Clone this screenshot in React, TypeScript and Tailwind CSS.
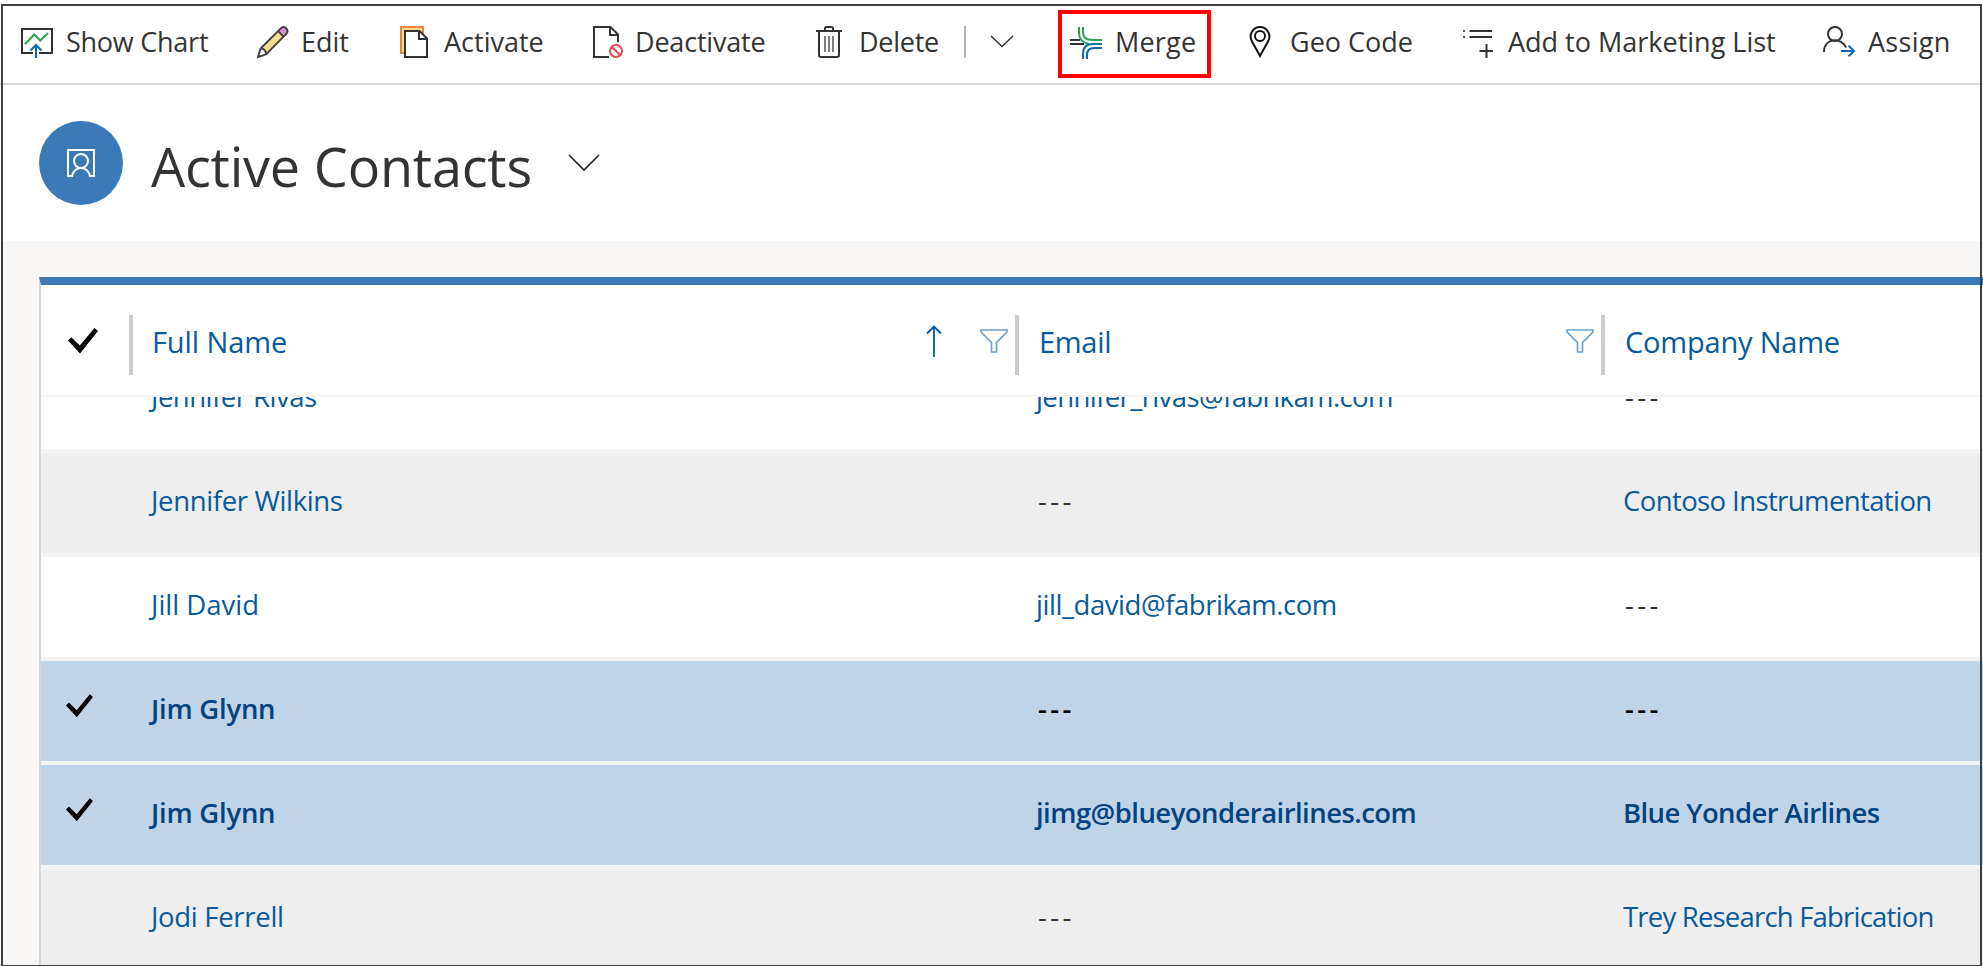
import type { ReactNode } from "react";

const ink = "#333333";
const blue = "#0f67b5";

function Icon({ children, className = "" }: { children: ReactNode; className?: string }) {
  return (
    <svg viewBox="0 0 32 32" fill="none" className={`h-8 w-8 shrink-0 overflow-visible ${className}`}>
      {children}
    </svg>
  );
}

const ChartIcon = () => (
  <Icon>
    <path d="M12 27H1V3h30v24H18" stroke={ink} strokeWidth="2" />
    <path d="M4 18.3 13.3 8.5l6 6L27 7" stroke="#27a34f" strokeWidth="2" />
    <path d="M15 32V19M9.5 24.5 15 19l5.5 5.5" stroke={blue} strokeWidth="2" />
  </Icon>
);

const PencilIcon = () => (
  <Icon>
    <path d="M4.6 22.6 24 3l6 6L10 28.4Z" fill="#f8da92" />
    <path d="M23 4c5-6 12 1 6.5 6.5Z" fill="#d792d9" />
    <path d="M2 31 4.6 22.6 10 28.4Z" fill="#fff" />
    <path
      d="M2 31 4.6 22.6 24.500 2.600c4-4 9.500 1.500 5.500 5.500L10 28.400ZM22 5l6 6M4.600 22.600c3-.6 6 2.800 5.400 5.800"
      stroke="#404040"
      strokeWidth="1.9"
    />
  </Icon>
);

const ActivateIcon = () => (
  <Icon>
    <path d="M2 1h22v26H2Z" fill="#f9db8f" stroke="#e8843d" strokeWidth="2" />
    <path d="M6 5h14.5L28 12.5V31H6Z" fill="#fff" stroke={ink} strokeWidth="2" />
    <path d="M20 5v8h8" stroke={ink} strokeWidth="2" />
  </Icon>
);

const DeactivateIcon = () => (
  <Icon>
    <path d="M19 31H4V1h16.5L28 8.5V16M20 1v8h8" stroke={ink} strokeWidth="2" />
    <circle cx="26" cy="25" r="6" stroke="#e9484d" strokeWidth="2" />
    <path d="m21.8 20.8 8.4 8.4" stroke="#e9484d" strokeWidth="2" />
  </Icon>
);

const TrashIcon = () => (
  <Icon>
    <path
      d="M2 5h26M11 5V2.5Q11 1 12.5 1h5Q19 1 19 2.5V5M5 5v24q0 2 2 2h16q2 0 2-2V5"
      stroke={ink}
      strokeWidth="2"
    />
    <path d="M11 10v16M15 10v16M19 10v16" stroke="#707070" strokeWidth="1.8" />
  </Icon>
);

const MergeIcon = () => (
  <Icon>
    <path d="M0 13h10M0 17h14" stroke={ink} strokeWidth="2" />
    <path d="M13 0v4.5Q13 13 22 13h10M9 0v6q0 9 10 11" stroke="#27a34f" strokeWidth="2" />
    <path d="M13 32v-5q0-10 10-10h9M17 32v-4q0-7 7-7h8" stroke={blue} strokeWidth="2" />
  </Icon>
);

const PinIcon = () => (
  <Icon>
    <path d="M15 30 7 15.5C3 8 8.5 1 15 1s12 7 8 14.500Z" stroke="#111" strokeWidth="2" />
    <circle cx="15" cy="10" r="5" stroke="#111" strokeWidth="2" />
  </Icon>
);

const ListIcon = () => (
  <Icon>
    <path d="M6.5 5H29M6.5 11H29M23.5 18v14M16.5 25H30" stroke={ink} strokeWidth="2" />
    <path d="M0 5h2M0 11h2" stroke="#555" strokeWidth="2" />
  </Icon>
);

const AssignIcon = () => (
  <Icon className="-ml-px">
    <circle cx="12" cy="8" r="7" stroke={ink} strokeWidth="2" />
    <path d="M1 26c0-15 18-14.5 22-4.5" stroke={ink} strokeWidth="2" />
    <path d="M18 25h13M25.5 19.8 31 25l-5.5 5.2" stroke={blue} strokeWidth="2" />
  </Icon>
);

const Funnel = () => (
  <svg viewBox="0 0 28 24" fill="none" className="-mt-[9px] h-6 w-7 shrink-0">
    <path d="M1 1h26v2L16.500 13.500V23h-5V13.500L1 3Z" stroke="#6ba1cd" strokeWidth="1.7" />
  </svg>
);

const Check = ({ className }: { className: string }) => (
  <svg viewBox="0 0 30 26" className={className}>
    <path d="M0 12.5 3.3 9.2 11.8 17.6 26.5 0 30 3 12 25.5Z" fill="#000" />
  </svg>
);

function Command({ icon, label, className = "" }: { icon: ReactNode; label: string; className?: string }) {
  return (
    <button className={`flex shrink-0 items-center gap-[13px] whitespace-nowrap text-left ${className}`}>
      {icon}
      <span>{label}</span>
    </button>
  );
}

type Cell = { text: string; fit?: string };
type Row = { name: Cell; email?: Cell; company?: Cell; selected?: boolean; shade?: boolean };

const rows: Row[] = [
  {
    name: { text: "Jennifer Rivas", fit: "tracking-[-0.5px]" },
    email: { text: "jennifer_rivas@fabrikam.com", fit: "tracking-[-0.6px]" },
  },
  {
    name: { text: "Jennifer Wilkins", fit: "tracking-[-0.35px]" },
    company: { text: "Contoso Instrumentation", fit: "tracking-[-0.6px]" },
    shade: true,
  },
  {
    name: { text: "Jill David", fit: "tracking-[0px]" },
    email: { text: "jill_david@fabrikam.com", fit: "tracking-[-0.45px]" },
  },
  { name: { text: "Jim Glynn", fit: "tracking-[-0.25px]" }, selected: true },
  {
    name: { text: "Jim Glynn", fit: "tracking-[-0.25px]" },
    email: { text: "jimg@blueyonderairlines.com", fit: "tracking-[-0.55px]" },
    company: { text: "Blue Yonder Airlines", fit: "tracking-[-0.6px]" },
    selected: true,
  },
  {
    name: { text: "Jodi Ferrell", fit: "tracking-[-0.3px]" },
    company: { text: "Trey Research Fabrication", fit: "tracking-[-0.8px]" },
    shade: true,
  },
];

function Value({ cell, selected }: { cell?: Cell; selected?: boolean }) {
  if (!cell) return <span className={`pl-[2px] tracking-[3.4px] ${selected ? "text-black" : "text-[#333]"}`}>---</span>;
  return <a className={`${selected ? "text-[#04437f]" : "text-[#085a9d]"} ${cell.fit ?? ""}`}>{cell.text}</a>;
}

function ContactRow({ row }: { row: Row }) {
  const tone = row.selected ? "bg-[#c0d4e8] font-semibold" : row.shade ? "bg-[#eeeeee]" : "bg-white";
  return (
    <div className={`flex h-[104px] shrink-0 items-center whitespace-nowrap border-b-4 border-[#f4f4f4] pb-[5px] ${tone}`}>
      <div className="w-[110px] shrink-0 pl-[25px]">
        {row.selected && <Check className="-mt-[6px] h-6 w-[27px]" />}
      </div>
      <div className="w-[885px] shrink-0">
        <Value cell={row.name} selected={row.selected} />
      </div>
      <div className="w-[587px] shrink-0">
        <Value cell={row.email} selected={row.selected} />
      </div>
      <Value cell={row.company} selected={row.selected} />
    </div>
  );
}

export default function App() {
  return (
    <div className="relative flex h-[966px] w-[1983px] flex-col overflow-hidden bg-white font-['Open_Sans',sans-serif] text-[#333]">
      <div className="flex h-[85px] shrink-0 items-center border-b-2 border-[#d8d8d8] pl-[21px] text-[27px]">
        <Command className="w-[235px] pt-px tracking-[-0.25px]" icon={<ChartIcon />} label="Show Chart" />
        <Command className="w-[143px] pt-px" icon={<PencilIcon />} label="Edit" />
        <Command className="w-[191px] pt-px" icon={<ActivateIcon />} label="Activate" />
        <Command className="w-[224px] pt-px tracking-[-0.2px]" icon={<DeactivateIcon />} label="Deactivate" />
        <Command className="w-[150px] pt-px tracking-[-0.25px]" icon={<TrashIcon />} label="Delete" />
        <div className="h-8 w-[2px] shrink-0 bg-[#b3b3b3]" />
        <svg viewBox="0 0 24 13" fill="none" className="ml-6 h-[13px] w-6 shrink-0">
          <path d="m1 1 11 10.5L23 1" stroke="#333" strokeWidth="1.5" />
        </svg>
        <div className="ml-11 mt-[5px] flex h-[68px] w-[153px] shrink-0 items-center border-4 border-[#ff0000] pb-[3px] pl-2">
          <Command className="tracking-[0.2px]" icon={<MergeIcon />} label="Merge" />
        </div>
        <Command className="ml-[34px] w-[218px] pt-px" icon={<PinIcon />} label="Geo Code" />
        <Command className="w-[361px] pt-px" icon={<ListIcon />} label="Add to Marketing List" />
        <Command className="pt-px tracking-[0.3px]" icon={<AssignIcon />} label="Assign" />
      </div>

      <div className="flex h-[156px] shrink-0 items-center pl-[39px]">
        <div className="flex h-[84px] w-[84px] items-center justify-center rounded-full bg-[#3b79b7]">
          <svg viewBox="0 0 28 28" fill="none" stroke="#fff" strokeWidth="2" className="h-7 w-7">
            <path d="M5 27H1V1h26v26h-4" />
            <circle cx="14" cy="12" r="7" />
            <path d="M5 28c1-12 17-12 18 0" />
          </svg>
        </div>
        <h1 className="ml-7 mt-1.5 whitespace-nowrap text-[54px] tracking-[-0.2px]">Active Contacts</h1>
        <svg viewBox="0 0 32 18" fill="none" className="ml-9 h-[18px] w-8">
          <path d="m1 1 15 15L31 1" stroke="#222" strokeWidth="1.6" />
        </svg>
      </div>

      <div className="flex min-h-0 flex-1 bg-[#f8f7f6] pl-[39px] pt-9">
        <div className="flex flex-1 flex-col border-l-2 border-t-8 border-l-[#d6d6d6] border-t-[#3b79b7] bg-white">
          <div className="flex h-[112px] shrink-0 items-center whitespace-nowrap border-b-2 border-[#f3f3f3] pt-[10px] text-[29px] text-[#085a9d]">
            <div className="w-[88px] shrink-0 pl-[27px]">
              <Check className="-mt-[8px] h-[26px] w-[30px]" />
            </div>
            <div className="flex h-[60px] w-[886px] shrink-0 items-center border-l-4 border-[#cbcbcb] pl-[19px] pr-[7px]">
              <span className="-mt-[7px] flex-1 tracking-[-0.1px]">Full Name</span>
              <svg viewBox="0 0 16 32" fill="none" className="-mt-[9px] mr-[38px] h-8 w-4">
                <path d="M8 32V2M1 8.5 8 1.5l7 7" stroke="#085a9d" strokeWidth="1.8" />
              </svg>
              <Funnel />
            </div>
            <div className="flex h-[60px] w-[586px] shrink-0 items-center border-l-4 border-[#cbcbcb] pl-5 pr-[7px]">
              <span className="-mt-[7px] flex-1 tracking-[-0.3px]">Email</span>
              <Funnel />
            </div>
            <div className="flex h-[60px] flex-1 items-center border-l-4 border-[#cbcbcb] pl-5">
              <span className="-mt-[7px] tracking-[-0.2px]">Company Name</span>
            </div>
          </div>
          <div className="flex min-h-0 flex-1 flex-col justify-start overflow-hidden text-[27.5px]">
            <div className="-mt-12 flex flex-col">
              {rows.map((row, i) => (
                <ContactRow key={i} row={row} />
              ))}
            </div>
          </div>
        </div>
      </div>

      <div className="pointer-events-none absolute left-px top-1 h-[962px] w-[1981px] border-x-2 border-b border-t-2 border-[#404040]" />
    </div>
  );
}
